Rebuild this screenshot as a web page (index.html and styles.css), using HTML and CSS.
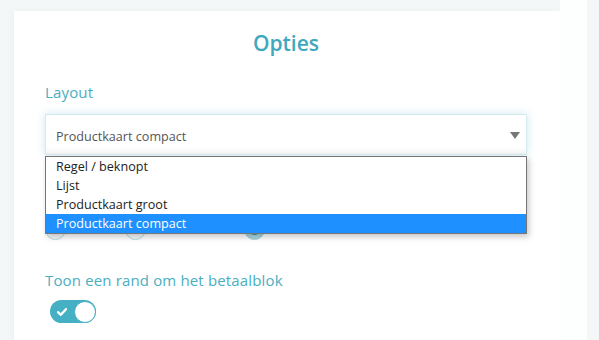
FILE: index.html
```html
<!DOCTYPE html>
<html lang="nl">
<head>
<meta charset="utf-8">
<title>Opties</title>
<link rel="stylesheet" href="styles.css">
</head>
<body>
<div class="page">
  <div class="panel">
    <div class="card">
      <h2 class="title">Opties</h2>
      <div class="field-label">Layout</div>
      <div class="select-wrap">
        <div class="select">
          <span class="select-value">Productkaart compact</span>
          <span class="select-arrow"></span>
        </div>
        <ul class="dropdown">
          <li class="option">Regel / beknopt</li>
          <li class="option">Lijst</li>
          <li class="option">Productkaart groot</li>
          <li class="option selected">Productkaart compact</li>
        </ul>
      </div>
      <div class="radios">
        <span class="radio"></span>
        <span class="radio"></span>
        <span class="radio checked"></span>
      </div>
      <div class="field-label second">Toon een rand om het betaalblok</div>
      <div class="toggle">
        <svg class="check" viewBox="0 0 10 8" width="10" height="8"><path d="M1 4.2 L3.8 6.8 L9 1.2" fill="none" stroke="#fff" stroke-width="2.4" stroke-linecap="round" stroke-linejoin="round"/></svg>
        <span class="knob"></span>
      </div>
    </div>
  </div>
</div>
</body>
</html>
```
FILE: styles.css
```css
html, body {
  margin: 0;
  padding: 0;
}
body {
  background: #f5f6f8;
  font-family: "Open Sans", "Noto Sans", sans-serif;
  width: 599px;
  height: 340px;
  overflow: hidden;
}
.page {
  width: 587px;
  height: 340px;
  background: #fdfefe;
}
.panel {
  width: 560px;
  height: 340px;
  box-sizing: border-box;
  background: #f3f7f8;
  padding: 11px 0 0 14px;
}
.card {
  background: #fff;
  height: 329px;
  box-sizing: border-box;
  padding: 18px 33px 0 31px;
  box-shadow: -3px 0 6px rgba(60, 90, 100, 0.04);
}
.title {
  margin: 0;
  font-size: 21px;
  line-height: 29px;
  font-weight: 600;
  color: #40a8bd;
  text-align: center;
}
.field-label {
  margin-top: 24px;
  font-size: 15px;
  line-height: 20px;
  letter-spacing: 0.15px;
  color: #4aaec2;
}
.field-label.second {
  margin-top: 30px;
}
.select-wrap {
  position: relative;
  margin-top: 12px;
}
.select {
  height: 41px;
  box-sizing: border-box;
  border: 1px solid #d4eaef;
  background: #fff;
  box-shadow: 0 0 9px rgba(74, 174, 194, 0.28), inset 0 -7px 6px -5px rgba(0, 0, 0, 0.07);
  display: flex;
  align-items: center;
  justify-content: space-between;
  padding: 4px 6px 0 10px;
}
.select-value {
  font-size: 12.6px;
  color: #555;
}
.select-arrow {
  width: 0;
  height: 0;
  border-left: 5.5px solid transparent;
  border-right: 5.5px solid transparent;
  border-top: 7px solid #777;
  margin-top: -3px;
}
.dropdown {
  position: absolute;
  left: 0;
  right: 0;
  top: 42px;
  margin: 0;
  padding: 0;
  list-style: none;
  background: #fff;
  border: 1px solid #767676;
  box-shadow: 2px 3px 6px rgba(0, 0, 0, 0.22);
  z-index: 5;
}
.option {
  height: 19px;
  line-height: 19px;
  padding-left: 10px;
  font-size: 12.6px;
  color: #222;
}
.option.selected {
  background: #1e90ff;
  color: #fff;
}
.radios {
  margin-top: 64px;
  display: grid;
  grid-template-columns: 80px 119px 21px;
}
.radio {
  width: 21px;
  height: 21px;
  box-sizing: border-box;
  border-radius: 50%;
  border: 1px solid #b6d9e1;
  background: #f4f9fa;
}
.radio.checked {
  background: radial-gradient(circle, #3e97a9 0 5px, #a9d6df 6px 100%);
  border-color: #9fcfd9;
}
.toggle {
  margin: 10px 0 0 5px;
  width: 46px;
  height: 23px;
  box-sizing: border-box;
  border-radius: 12px;
  background: #45afc4;
  display: flex;
  align-items: center;
  justify-content: space-between;
  padding-left: 7px;
}
.check {
  display: block;
}
.knob {
  width: 22px;
  height: 22px;
  box-sizing: border-box;
  border-radius: 50%;
  background: #fff;
  border: 1px solid #45afc4;
}
```
